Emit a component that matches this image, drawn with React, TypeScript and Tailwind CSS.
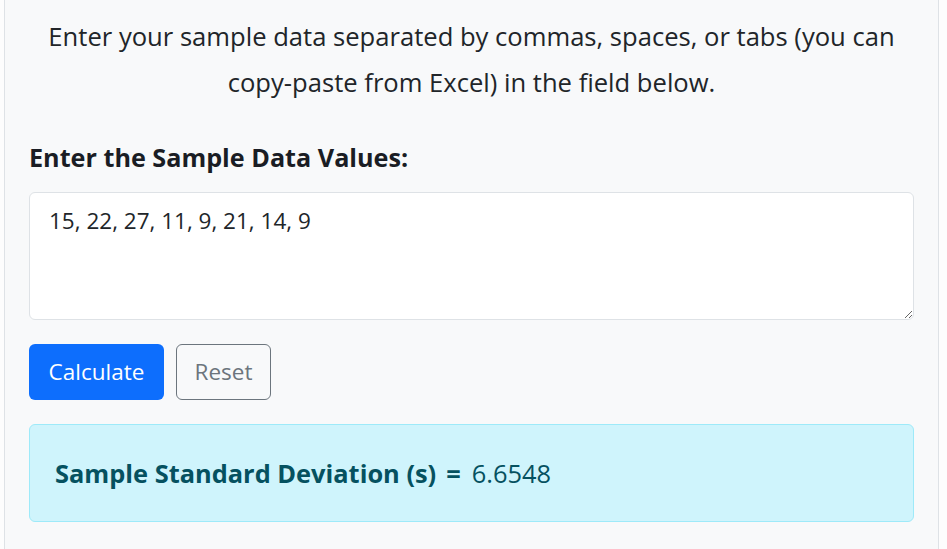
import React from "react";

export default function App() {
  return (
    <div className="min-h-screen w-full bg-[#fdfdfd]" style={{ fontFamily: '"Open Sans", "Noto Sans", sans-serif' }}>
      <div className="ml-[4px] w-[935px] min-h-[549px] border-x border-[#dee2e6] bg-[#f8f9fa] px-[24px] pt-[14px] text-[#212529]">
        <p className="text-center text-[25.6px] leading-[46px]">
          Enter your sample data separated by commas, spaces, or tabs (you can copy-paste from Excel) in the field below.
        </p>
        <label className="mt-[33px] block text-[25.2px] font-bold leading-[36px] text-[#1a1d24]">
          Enter the Sample Data Values:
        </label>
        <textarea
          className="mt-[17px] block h-[128px] w-full rounded-[6px] border border-[#dee2e6] bg-white px-[19px] pt-[11px] text-[22.5px] leading-[34px] text-[#212529] outline-none"
          defaultValue="15, 22, 27, 11, 9, 21, 14, 9"
        />
        <div className="mt-[24px] flex gap-[12px]">
          <button className="flex h-[56px] w-[135px] items-center justify-center rounded-[6px] bg-[#0d6efd] text-[22.5px] text-white">
            Calculate
          </button>
          <button className="flex h-[56px] w-[95px] items-center justify-center rounded-[6px] border border-[#6c757d] text-[22.5px] text-[#6c757d]">
            Reset
          </button>
        </div>
        <div className="mt-[24px] flex h-[98px] items-center rounded-[6px] border border-[#9eeaf9] bg-[#cff4fc] px-[25px] text-[25.4px] text-[#055160]">
          <span className="font-bold">Sample Standard Deviation (s)</span>
          <span className="ml-[10px] font-bold">=</span>
          <span className="ml-[11px]">6.6548</span>
        </div>
      </div>
    </div>
  );
}
